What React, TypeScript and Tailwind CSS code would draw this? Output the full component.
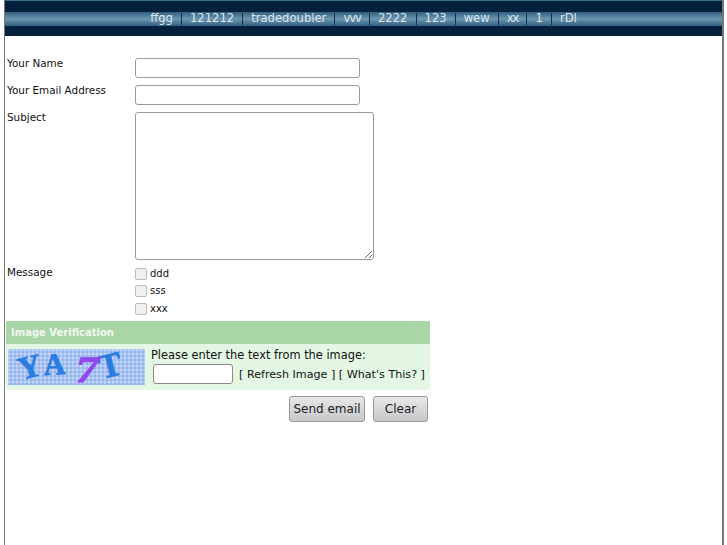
import * as React from 'react';

const navItems = [
    { label: 'ffgg', tracking: 'tracking-normal' },
    { label: '121212', tracking: 'tracking-normal' },
    { label: 'tradedoubler', tracking: 'tracking-normal' },
    { label: 'vvv', tracking: 'tracking-[-1px]' },
    { label: '2222', tracking: 'tracking-normal' },
    { label: '123', tracking: 'tracking-normal' },
    { label: 'wew', tracking: 'tracking-normal' },
    { label: 'xx', tracking: 'tracking-[-1px]' },
    { label: '1', tracking: 'tracking-normal' },
    { label: 'rDl', tracking: 'tracking-normal' },
];

const Captcha = () => (
    <svg width="137" height="36" viewBox="0 0 137 36" className="block overflow-visible">
        <defs>
            <pattern id="dots" width="4" height="4" patternUnits="userSpaceOnUse">
                <rect width="4" height="4" fill="#a9c4f2" />
                <circle cx="1" cy="1" r="1" fill="#cfd8f7" />
                <circle cx="3" cy="3" r="1" fill="#88acee" />
            </pattern>
        </defs>
        <rect width="137" height="36" fill="url(#dots)" />
        <g fontFamily="'Liberation Serif', serif" fontWeight="700" fill="#2a7ce0" stroke="#2a7ce0" strokeWidth="0.8">
            <text x="0" y="0" fontSize="32" transform="translate(13 31) rotate(-14)">Y</text>
            <text x="0" y="0" fontSize="30" transform="translate(36 26) rotate(-3)">A</text>
            <text x="0" y="0" fontSize="34" transform="translate(94 30) rotate(-14)">T</text>
        </g>
        <text x="0" y="0" fontFamily="'Liberation Serif', serif" fontWeight="700" fontSize="37" fill="#9146ee" stroke="#9146ee" strokeWidth="0.8" transform="translate(65 33) skewX(-12) scale(1.25 1)">7</text>
    </svg>
);

export default function App() {
    return (
        <div className="h-[545px] w-[727px] overflow-hidden bg-white font-['DejaVu_Sans',sans-serif] text-[10.4px] text-[#111]">
            {/* Page frame */}
            <div className="ml-[4px] h-[545px] w-[720px] border-l border-r-2 border-[#777]">
                {/* Header band */}
                <div className="flex h-[36px] flex-col bg-[#03203c]">
                    <div className="h-[1px] bg-[#3d6f8e]" />
                    <div className="mt-[11px] flex h-[14px] justify-center bg-gradient-to-b from-[#2f5f80] via-[#6e97b0] to-[#2f5f80]">
                        <div className="flex h-full items-center">
                            {navItems.map((item, i) => (
                                <span
                                    key={item.label}
                                    className={`flex h-[12px] items-center px-[8px] text-[11.6px] leading-none text-[#dbe6ee] ${item.tracking} ${i < navItems.length - 1 ? 'border-r border-[#14304a]' : ''}`}
                                >
                                    {item.label}
                                </span>
                            ))}
                        </div>
                    </div>
                </div>

                <div className="pl-[1px] pt-[22px]">
                    <div className="w-[424px]">
                        <div className="flex h-[27px]">
                            <label className="-mt-[1px] w-[129px] pl-[1px] leading-[12px]">Your Name</label>
                            <input className="h-[20px] w-[225px] rounded-[3px] border border-[#9a9a9a] bg-white" />
                        </div>
                        <div className="flex h-[27px]">
                            <label className="-mt-[1px] w-[129px] pl-[1px] leading-[12px]">Your Email Address</label>
                            <input className="h-[20px] w-[225px] rounded-[3px] border border-[#9a9a9a] bg-white" />
                        </div>
                        <div className="flex h-[154px]">
                            <label className="-mt-[1px] w-[129px] pl-[1px] leading-[12px]">Subject</label>
                            <textarea className="h-[148px] w-[239px] rounded-[3px] border border-[#9a9a9a] bg-white" />
                        </div>
                        <div className="flex h-[55px]">
                            <label className="w-[129px] pl-[1px] leading-[12px]">Message</label>
                            <div className="-mt-[1px] flex flex-col">
                                {['ddd', 'sss', 'xxx'].map((option) => (
                                    <div key={option} className="flex h-[17.5px] items-center gap-[3px]">
                                        <span className="h-[12px] w-[12px] rounded-[2px] border border-[#bbb] bg-[#f0f0f0]" />
                                        <span className="text-[10px] leading-none">{option}</span>
                                    </div>
                                ))}
                            </div>
                        </div>

                        {/* Image verification */}
                        <div className="flex h-[23px] items-center bg-[#a9d5a7] pl-[5px] text-[10px] font-bold text-[#f2f8f0]">
                            Image Verification
                        </div>
                        <div className="flex h-[46px] bg-[#e4f7e4] pl-[2px] pt-[5px]">
                            <Captcha />
                            <div className="ml-[6px] flex flex-col text-[11.4px] leading-[14px]">
                                <span className="-mt-[1px]">Please enter the text from the image:</span>
                                <div className="mt-[2px] flex items-center">
                                    <input className="ml-[2px] h-[20px] w-[80px] rounded-[3px] border border-[#8a8a8a] bg-white" />
                                    <span className="ml-[6px] mt-[1px] text-[11.15px]">[ Refresh Image ] [ What's This? ]</span>
                                </div>
                            </div>
                        </div>

                        {/* Buttons */}
                        <div className="mt-[6px] flex justify-end gap-[8px] pr-[2px]">
                            <button className="h-[26px] w-[76px] rounded-[3px] border border-[#999] bg-gradient-to-b from-[#e8e8ea] to-[#c8c8cc] text-[12px] text-[#222]">
                                Send email
                            </button>
                            <button className="h-[26px] w-[55px] rounded-[3px] border border-[#999] bg-gradient-to-b from-[#e8e8ea] to-[#c8c8cc] text-[12px] text-[#222]">
                                Clear
                            </button>
                        </div>
                    </div>
                </div>
            </div>
        </div>
    );
}
